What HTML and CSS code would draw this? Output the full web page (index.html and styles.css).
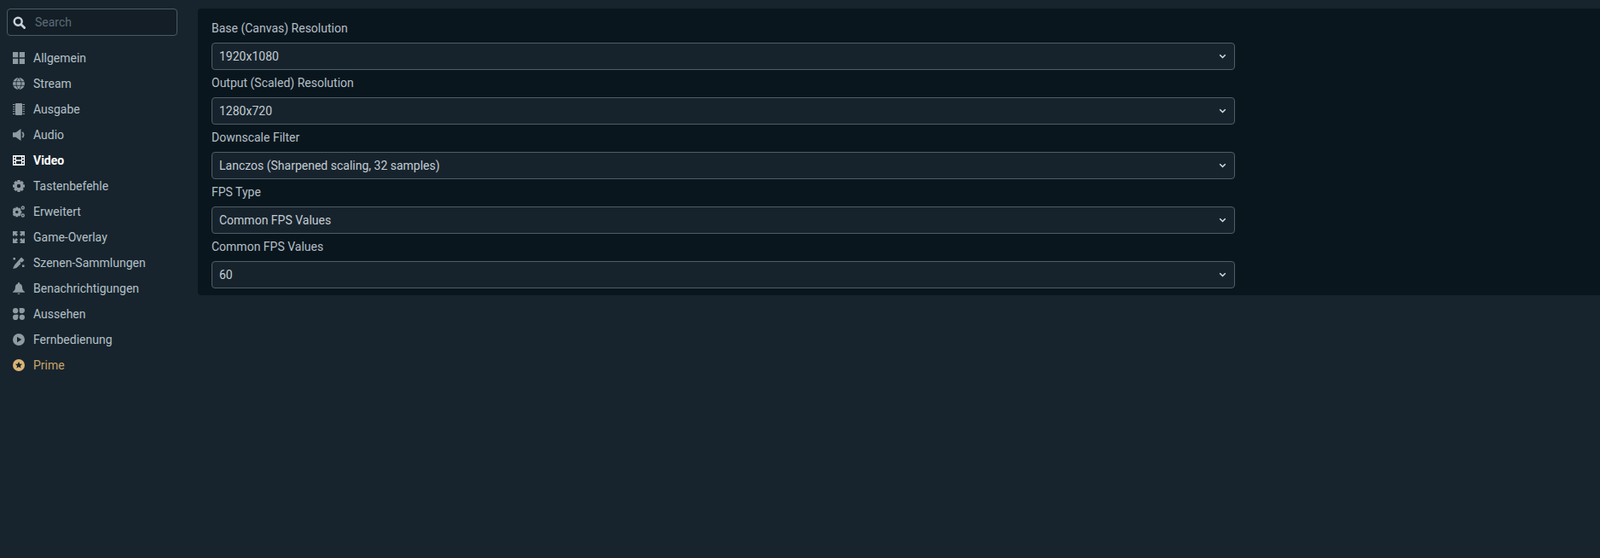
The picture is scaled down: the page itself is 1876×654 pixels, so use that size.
FILE: index.html
```html
<!DOCTYPE html>
<html lang="en">
  <head>
    <meta charset="UTF-8" />
    <meta name="viewport" content="width=device-width, initial-scale=1.0" />
    <title>Settings</title>
    <link rel="stylesheet" href="styles.css">
  </head>
  <body>
    <div class="sidebar">
      <div class="search">
        <svg class="search-icon" viewBox="0 0 15 15"><circle cx="6.200" cy="6.200" r="4.500" fill="none" stroke="currentColor" stroke-width="2.400"/><path d="M9.600 9.600l4 4" stroke="currentColor" stroke-width="2.800" stroke-linecap="round"/></svg>
        <span class="search-text">Search</span>
      </div>
      <ul class="nav">
        <li class="nav-item">
          <svg class="nav-icon" viewBox="0 0 14 14"><path d="M0 0h6.200v6.200H0zM7.800 0H14v6.200H7.800zM0 7.800h6.200V14H0zM7.800 7.800H14V14H7.800z"/></svg>
          Allgemein
        </li>
        <li class="nav-item">
          <svg class="nav-icon" viewBox="0 0 14 14"><circle cx="7" cy="7" r="7"/><path d="M0 4.700h14M0 9.300h14M7 0c-4 4-4 10 0 14M7 0c4 4 4 10 0 14" fill="none" stroke="#18242d" stroke-width=".8"/></svg>
          Stream
        </li>
        <li class="nav-item">
          <svg class="nav-icon" viewBox="0 0 14 14"><rect x="3" y="0" width="8" height="14" rx="1"/><path d="M0 1.500h2.500M0 4.200h2.500M0 7h2.500M0 9.800h2.500M0 12.500h2.500M11.500 1.500H14M11.500 4.200H14M11.500 7H14M11.500 9.800H14M11.500 12.500H14" stroke="currentColor" stroke-width="1.100"/></svg>
          Ausgabe
        </li>
        <li class="nav-item">
          <svg class="nav-icon" viewBox="0 0 14 14"><path d="M0 4.200h3.500L9.500 0v14l-6-4.200H0z"/><path d="M11.200 3.800c1.500 1.800 1.500 4.600 0 6.400" fill="none" stroke="currentColor" stroke-width="1.800"/></svg>
          Audio
        </li>
        <li class="nav-item active">
          <svg class="nav-icon" viewBox="0 0 14 14"><path fill-rule="evenodd" d="M0 1h14v12H0zM3 2.700H1.200v1.900H3zM3 6.050H1.200v1.900H3zM3 9.400H1.200v1.900H3zM12.800 2.700H11v1.900h1.800zM12.800 6.050H11v1.900h1.800zM12.800 9.400H11v1.900h1.800zM10 2.700H4v3.600h6zM10 7.700H4v3.600h6z"/></svg>
          Video
        </li>
        <li class="nav-item">
          <svg class="nav-icon" viewBox="0 0 14 14"><path fill-rule="evenodd" d="M5.500 0h3l.4 2 1.800-1 2.100 2.100-1 1.800 2.200.6v3l-2.200.6 1 1.800-2.100 2.100-1.800-1-.4 2h-3l-.4-2-1.800 1-2.100-2.100 1-1.800L0 8.500v-3l2.200-.6-1-1.800L3.300 1l1.800 1zM7 4.800a2.200 2.200 0 1 0 0 4.400 2.200 2.200 0 0 0 0-4.400z"/></svg>
          Tastenbefehle
        </li>
        <li class="nav-item">
          <svg class="nav-icon" viewBox="0 0 14 14"><path fill-rule="evenodd" d="M3.500 1.800h2.600l.4 1.500 1.400-.7 1.800 1.800-.8 1.400 1.400.5v2.600l-1.400.5.800 1.400-1.800 1.800-1.400-.8-.4 1.500H3.500l-.4-1.500-1.400.8L-.1 10.600l.8-1.400L-.7 8.700V6.300L.7 5.800-.1 4.400l1.800-1.800 1.400.7zM4.800 5.700a1.800 1.800 0 1 0 0 3.600 1.800 1.800 0 0 0 0-3.600z"/><circle cx="11.800" cy="2.500" r="1.500" fill="none" stroke="currentColor" stroke-width="1.400"/><circle cx="11.800" cy="11.500" r="1.500" fill="none" stroke="currentColor" stroke-width="1.400"/></svg>
          Erweitert
        </li>
        <li class="nav-item">
          <svg class="nav-icon" viewBox="0 0 14 14"><path d="M0 0h5.500v1.800H3.800l2.200 2.200L4 6 1.800 3.800v1.700H0zM14 0v5.500h-1.800V3.800L10 6 8 4l2.200-2.200H8.500V0zM0 14V8.500h1.800v1.700L4 8l2 2-2.200 2.200h1.700V14zM14 14H8.500v-1.800h1.700L8 10l2-2 2.200 2.200V8.500H14z"/></svg>
          Game-Overlay
        </li>
        <li class="nav-item">
          <svg class="nav-icon" viewBox="0 0 14 14"><path d="M10 .5l3.500 3.200-2.800 3-1-1-1.200 1.300 1 1L6 11.500c-1.800 2.200-4.500 2.500-6 2 1-1 1.300-3 2.500-4.500z"/><path d="M11 9.500h2.500V12H11zM.5 1h2.500v2.500H.5z"/></svg>
          Szenen-Sammlungen
        </li>
        <li class="nav-item">
          <svg class="nav-icon" viewBox="0 0 14 14"><path d="M7 0c.6 0 1 .4 1 1v.5c2 .5 3.100 2.100 3.100 4.300 0 2.500.9 3.900 2.900 5.200v.8H0V11c2-1.300 2.900-2.700 2.900-5.200 0-2.200 1.100-3.800 3.100-4.300V1c0-.6.400-1 1-1zM5.500 12.800h3C8.500 13.500 7.800 14 7 14s-1.500-.5-1.500-1.200z"/></svg>
          Benachrichtigungen
        </li>
        <li class="nav-item">
          <svg class="nav-icon" viewBox="0 0 14 14"><circle cx="3.150" cy="3.150" r="3.150"/><path d="M7.700 0H11.500A2.500 2.500 0 0 1 14 2.500 3.800 3.800 0 0 1 10.200 6.300 2.500 2.500 0 0 1 7.700 3.800z"/><path d="M0 10.500A3 3 0 0 1 3 7.700H6.300V11A3 3 0 0 1 0 11z"/><circle cx="10.850" cy="10.850" r="3.150"/></svg>
          Aussehen
        </li>
        <li class="nav-item">
          <svg class="nav-icon" viewBox="0 0 14 14"><path fill-rule="evenodd" d="M7 0a7 7 0 1 1 0 14A7 7 0 0 1 7 0zM5 3.800v6.400L10.300 7z"/></svg>
          Fernbedienung
        </li>
        <li class="nav-item prime">
          <svg class="nav-icon" viewBox="0 0 14 14"><path fill-rule="evenodd" d="M7 0a7 7 0 1 1 0 14A7 7 0 0 1 7 0zM7 2.800L5.800 5.500l-2.900.3 2.200 1.900-.7 2.900L7 9.100l2.600 1.500-.7-2.900 2.200-1.900-2.900-.3z"/></svg>
          Prime
        </li>
      </ul>
    </div>

    <div class="content">
      <div class="panel">
        <div class="field">
          <div class="field-label">Base (Canvas) Resolution</div>
          <div class="select">1920x1080<svg class="chevron" viewBox="0 0 10 7"><path d="M1.200 1.500L5 5.200l3.800-3.700"/></svg></div>
        </div>
        <div class="field">
          <div class="field-label">Output (Scaled) Resolution</div>
          <div class="select">1280x720<svg class="chevron" viewBox="0 0 10 7"><path d="M1.200 1.500L5 5.200l3.800-3.700"/></svg></div>
        </div>
        <div class="field">
          <div class="field-label">Downscale Filter</div>
          <div class="select">Lanczos (Sharpened scaling, 32 samples)<svg class="chevron" viewBox="0 0 10 7"><path d="M1.200 1.500L5 5.200l3.800-3.700"/></svg></div>
        </div>
        <div class="field">
          <div class="field-label">FPS Type</div>
          <div class="select">Common FPS Values<svg class="chevron" viewBox="0 0 10 7"><path d="M1.200 1.500L5 5.200l3.800-3.700"/></svg></div>
        </div>
        <div class="field">
          <div class="field-label">Common FPS Values</div>
          <div class="select">60<svg class="chevron" viewBox="0 0 10 7"><path d="M1.200 1.500L5 5.200l3.800-3.700"/></svg></div>
        </div>
      </div>
    </div>
  </body>
</html>
```

FILE: styles.css
```css
* {
  box-sizing: border-box;
}
html,
body {
  height: 100%;
}
body {
  margin: 0;
  display: flex;
  overflow: hidden;
  font-family: Roboto, "Liberation Sans", sans-serif;
  font-size: 14px;
  color: #bdc8d0;
  background-color: #17242d;
}
.sidebar {
  width: 232px;
  flex-shrink: 0;
  padding: 10px 0 0 8px;
}
.search {
  width: 200px;
  height: 32px;
  display: flex;
  align-items: center;
  padding-left: 6px;
  border: 1px solid #4b5a65;
  border-radius: 4px;
  background-color: #131e27;
}
.search-icon {
  width: 15px;
  height: 15px;
  color: #c8d2d9;
  margin-right: 11px;
}
.search-text {
  color: #5d6b75;
}
.nav {
  list-style: none;
  margin: 11px 0 0;
  padding: 0;
}
.nav-item {
  height: 30px;
  display: flex;
  align-items: center;
  padding-left: 7px;
  color: #b5c0c7;
}
.nav-item.active {
  color: #fff;
  font-weight: 700;
}
.nav-item.prime {
  color: #c9a36c;
}
.nav-icon {
  width: 14px;
  height: 14px;
  margin-right: 10px;
  flex-shrink: 0;
  fill: currentColor;
  color: #8f9aa1;
}
.active .nav-icon {
  color: #fff;
}
.prime .nav-icon {
  color: #dcb474;
}
.content {
  flex: 1;
  min-width: 0;
  padding-top: 10px;
}
.panel {
  height: 336px;
  padding: 8px 0 0 16px;
  border-radius: 4px 0 0 4px;
  background-color: #0a161d;
}
.field {
  width: 1200px;
  height: 64px;
}
.field-label {
  height: 32px;
  line-height: 30px;
  color: #b4bfc7;
}
.select {
  height: 32px;
  display: flex;
  align-items: center;
  justify-content: space-between;
  padding: 0 9px 0 8px;
  border: 1px solid #4f5d68;
  border-radius: 4px;
  color: #c3cdd4;
  background-color: #17232c;
}
.chevron {
  width: 9px;
  height: 6px;
  fill: none;
  stroke: #d5dde2;
  stroke-width: 1.8;
}
```
